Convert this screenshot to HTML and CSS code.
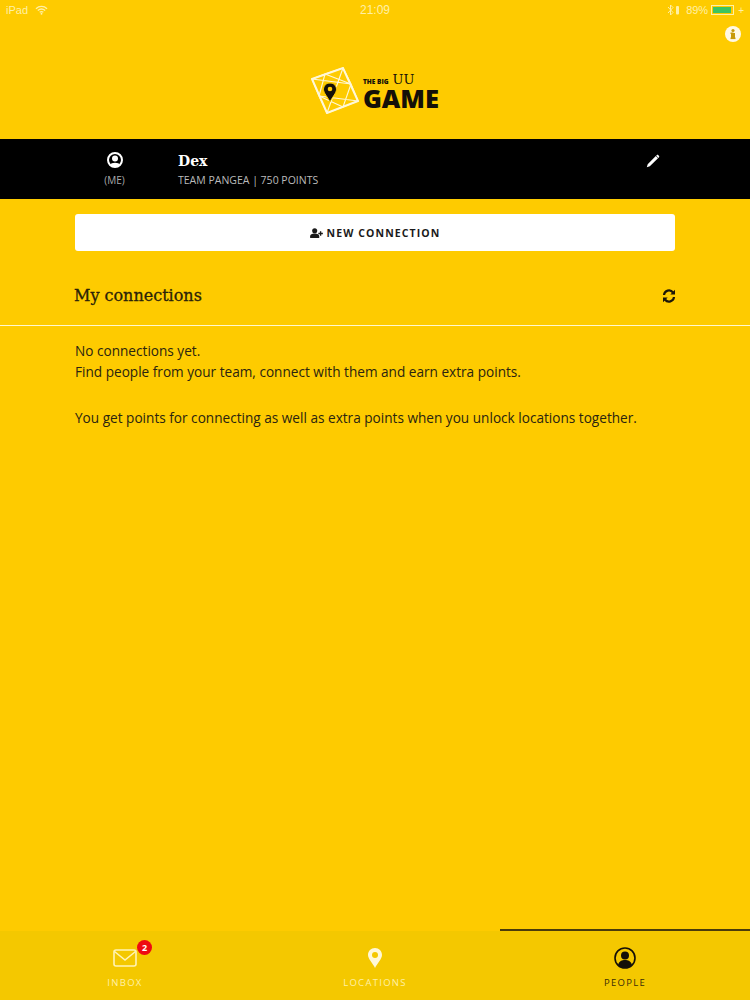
FILE: index.html
```html
<!DOCTYPE html>
<html lang="en">
<head>
<meta charset="utf-8">
<title>The Big UU Game</title>
<link rel="stylesheet" href="styles.css">
</head>
<body>
<div class="app">
  <div class="status">
    <div class="status-left">
      <span>iPad</span>
      <svg class="wifi" viewBox="0 0 14 10"><path d="M1 3.600C4.500.4 9.500.4 13 3.600M3 5.600c2.400-2 5.600-2 8 0M5 7.500c1.200-.9 2.800-.9 4 0" fill="none" stroke="currentColor" stroke-width="1.400"/><circle cx="7" cy="9" r="1" fill="currentColor"/></svg>
    </div>
    <div class="status-time">21:09</div>
    <div class="status-right">
      <svg class="bt" viewBox="0 0 14 12"><path d="M1 3l5 5.500L3.500 11V1L6 3.500 1 9" fill="none" stroke="currentColor" stroke-width="1"/><rect x="9" y="2" width="3" height="8.500" rx="1" fill="currentColor"/></svg>
      <span>89%</span>
      <span class="battery"><span class="battery-fill"></span></span>
      <span class="battery-plus">+</span>
    </div>
  </div>
  <header class="header">
    <svg class="info" viewBox="0 0 16 16"><circle cx="8" cy="8" r="8" fill="#fff9e6"/><rect x="6" y="7" width="4" height="6" fill="#c79a0a"/><rect x="5.500" y="11.500" width="5" height="1.600" fill="#c79a0a"/><rect x="5.500" y="6.500" width="3" height="1.500" fill="#c79a0a"/><circle cx="8" cy="4.500" r="1.600" fill="#c79a0a"/></svg>
    <div class="logo">
      <svg class="logo-mark" viewBox="0 0 48 47">
        <path d="M1 12 32 1l15 33-31 12Z" fill="none" stroke="#fff8d8" stroke-width="2"/>
        <path d="M14 7l26 10-8 23-24-11ZM1 12l13-5M1 12l7 17M1 12l39 5M32 1 14 7M32 1l8 16M32 1 16 46M47 34l-7-17M47 34l-15 6M47 34 8 29M16 46l-8-17M16 46l16-6" fill="none" stroke="#fff8d8" stroke-width="1.100"/>
        <path d="M19 16c-4 0-6.500 3-6.500 6.300 0 4 4.500 8 6.500 12.700 2-4.700 6.500-8.700 6.500-12.700C25.500 19 23 16 19 16Z" fill="#141008" stroke="#fecb00" stroke-width="1"/>
        <circle cx="19" cy="22" r="2.300" fill="#fc0"/>
      </svg>
      <div class="logo-text">
        <div class="logo-top"><span class="logo-big">THE BIG</span><span class="logo-uu">UU</span></div>
        <div class="logo-game">GAME</div>
      </div>
    </div>
  </header>
  <section class="profile">
    <div class="me">
      <svg class="me-icon" viewBox="0 0 16 16"><circle cx="8" cy="8" r="7" fill="none" stroke="#fff" stroke-width="2"/><circle cx="8" cy="6.500" r="3" fill="#fff"/><path d="M3 13c1-3 9-3 10 0l-2 2H5Z" fill="#fff"/></svg>
      <div class="me-label">(ME)</div>
    </div>
    <div class="who">
      <div class="who-name">Dex</div>
      <div class="who-team">TEAM PANGEA | 750 POINTS</div>
    </div>
    <svg class="pencil" viewBox="0 0 14 14"><path d="M3.800 12.300.8 13.200l.9-3L9.800 2l2.200 2.200ZM10.700 1.200c.5-.5 1.100-.5 1.500-.1l.8.800c.4.400.4 1 0 1.400l-.6.600-2.300-2.300Z" fill="#fff"/></svg>
  </section>
  <main class="content">
    <button class="new-btn" type="button">
      <svg class="add-icon" viewBox="0 0 14 11"><circle cx="5" cy="3" r="2.800" fill="#1a1a1a"/><path d="M0 11V9c0-2 2-3 5-3s5 1 5 3v2Z" fill="#1a1a1a"/><path d="M9 6h5M11.500 3.500v5" stroke="#1a1a1a" stroke-width="1.500"/></svg>
      NEW CONNECTION
    </button>
    <div class="section-head">
      <h2 class="section-title">My connections</h2>
      <svg class="refresh" viewBox="0 0 14 14"><path d="M2 6a5 5 0 0 1 9-2.500M12 8a5 5 0 0 1-9 2.500" fill="none" stroke="#1c1608" stroke-width="2.200"/><path d="M13 .8v4.700H8.300ZM1 13.200V8.500h4.700Z" fill="#1c1608"/></svg>
    </div>
  </main>
  <div class="rule"></div>
  <div class="message">
    <p class="msg-first">No connections yet.<br>Find people from your team, connect with them and earn extra points.</p>
    <p class="msg-second">You get points for connecting as well as extra points when you unlock locations together.</p>
  </div>
  <nav class="tabs">
    <div class="tab">
      <span class="tab-icon">
        <svg class="mail" viewBox="0 0 24 18"><rect x="1" y="1" width="22" height="16" rx="2" fill="none" stroke="#fff3b5" stroke-width="1.600"/><path d="M1.500 2.500 12 11 22.500 2.500" fill="none" stroke="#fff3b5" stroke-width="1.600"/></svg>
        <span class="badge">2</span>
      </span>
      <span class="tab-label">INBOX</span>
    </div>
    <div class="tab">
      <span class="tab-icon">
        <svg class="pin" viewBox="0 0 14 20"><path d="M7 0C3 0 0 3 0 7c0 4 5 8.500 7 13 2-4.500 7-9 7-13 0-4-3-7-7-7Z" fill="#fff8d8"/><circle cx="7" cy="7" r="3" fill="#f5c800"/></svg>
      </span>
      <span class="tab-label">LOCATIONS</span>
    </div>
    <div class="tab tab-active">
      <span class="tab-icon">
        <svg class="person" viewBox="0 0 22 22"><circle cx="11" cy="11" r="10" fill="none" stroke="#141008" stroke-width="1.600"/><circle cx="11" cy="8.500" r="4" fill="#141008"/><path d="M4 18c1-4 4-5 7-5s6 1 7 5c-2 2-4.500 3-7 3s-5-1-7-3Z" fill="#141008"/></svg>
      </span>
      <span class="tab-label">PEOPLE</span>
    </div>
  </nav>
</div>
</body>
</html>
```
FILE: styles.css
```css
* { box-sizing: border-box; }
html, body { margin: 0; padding: 0; }
body { font-family: "Open Sans", "Liberation Sans", sans-serif; color: #2a2410; background: #fc0; }
.app { width: 750px; height: 1000px; display: flex; flex-direction: column; background: #fecb00; overflow: hidden; }
.status { height: 20px; flex: none; padding: 0 6px; display: flex; justify-content: space-between; align-items: center; font-family: "Liberation Sans", sans-serif; font-size: 11px; color: #fff0a6; position: relative; }
.status-left { display: flex; align-items: center; gap: 7px; }
.wifi { width: 13px; height: 10px; }
.status-time { position: absolute; left: 0; right: 0; text-align: center; font-size: 12px; }
.status-right { display: flex; align-items: center; gap: 3px; }
.bt { width: 14px; height: 12px; margin-right: 2px; }
.battery { width: 23px; height: 10px; border: 1px solid #fff0a6; display: block; padding: 1px; }
.battery-fill { display: block; width: 92%; height: 100%; background: #3dc45f; }
.battery-plus { font-size: 10px; margin-left: 1px; }
.header { height: 119px; flex: none; display: flex; justify-content: center; position: relative; }
.info { position: absolute; right: 9px; top: 6px; width: 16px; height: 16px; }
.logo { display: flex; align-items: center; gap: 4px; height: 47px; margin-top: 47px; }
.logo-mark { width: 48px; height: 47px; }
.logo-text { display: flex; flex-direction: column; color: #141008; margin-top: 0; }
.logo-top { display: flex; align-items: flex-end; gap: 4px; height: 14px; }
.logo-big { font-size: 6.500px; font-weight: 800; line-height: 8px; }
.logo-uu { font-family: "DejaVu Serif", serif; font-size: 13px; line-height: 13px; }
.logo-game { font-size: 25.500px; font-weight: 800; line-height: 24px; }
.profile { height: 60px; flex: none; background: #000; color: #fff; display: flex; padding: 0 0 0 75px; position: relative; }
.me { width: 79px; padding-top: 13px; display: flex; flex-direction: column; align-items: center; }
.me-icon { width: 16px; height: 16px; }
.me-label { font-size: 10px; line-height: 14px; margin-top: 5px; color: #aaa; }
.who { margin-left: 24px; padding-top: 13px; }
.who-name { font-family: "DejaVu Serif", serif; font-weight: 700; font-size: 14px; line-height: 18px; }
.who-team { font-size: 10.500px; line-height: 14px; margin-top: 3px; color: #bbb; }
.pencil { position: absolute; left: 646px; top: 15px; width: 14px; height: 14px; }
.content { padding: 15px 75px 0; flex: none; }
.new-btn { width: 600px; height: 37px; display: flex; align-items: center; justify-content: center; gap: 4px; background: #fff; border: 0; border-radius: 3px; font-family: "Open Sans", sans-serif; font-weight: 700; font-size: 10.500px; letter-spacing: 1.100px; color: #1a1a1a; }
.add-icon { width: 13px; height: 10px; }
.section-head { height: 74px; display: flex; align-items: center; justify-content: space-between; padding-top: 14px; }
.section-title { margin: 0 0 0 -1px; font-family: "DejaVu Serif", serif; font-weight: 400; font-size: 16px; color: #2a2208; -webkit-text-stroke: 0.3px #2a2208; }
.refresh { width: 14px; height: 14px; margin-right: -1px; margin-top: 2px; }
.rule { height: 1px; flex: none; background: #fff8d0; }
.message { padding: 14px 75px 0; font-size: 13.620px; line-height: 21px; flex: 1; }
.message p { margin: 0; }
.msg-second { padding-top: 25px; }
.tabs { height: 71px; flex: none; display: grid; grid-template-columns: 1fr 1fr 1fr; background: linear-gradient(#fecb00 2px, #f4c800 2px); }
.tab { display: flex; flex-direction: column; align-items: center; padding-top: 16px; border-top: 2px solid transparent; color: #fff0a6; }
.tab-active { border-top-color: #4a3c0a; color: #3a2e08; }
.tab-icon { height: 22px; display: flex; align-items: center; justify-content: center; position: relative; }
.mail { width: 24px; height: 18px; }
.pin { width: 14px; height: 20px; }
.person { width: 22px; height: 22px; }
.badge { position: absolute; left: 24px; top: -7px; width: 15px; height: 15px; border-radius: 50%; background: #ee0a12; color: #fff; font-size: 9px; font-weight: 700; line-height: 15px; text-align: center; }
.tab-label { font-size: 9.500px; letter-spacing: 1.300px; line-height: 14px; margin-top: 7px; }
```
